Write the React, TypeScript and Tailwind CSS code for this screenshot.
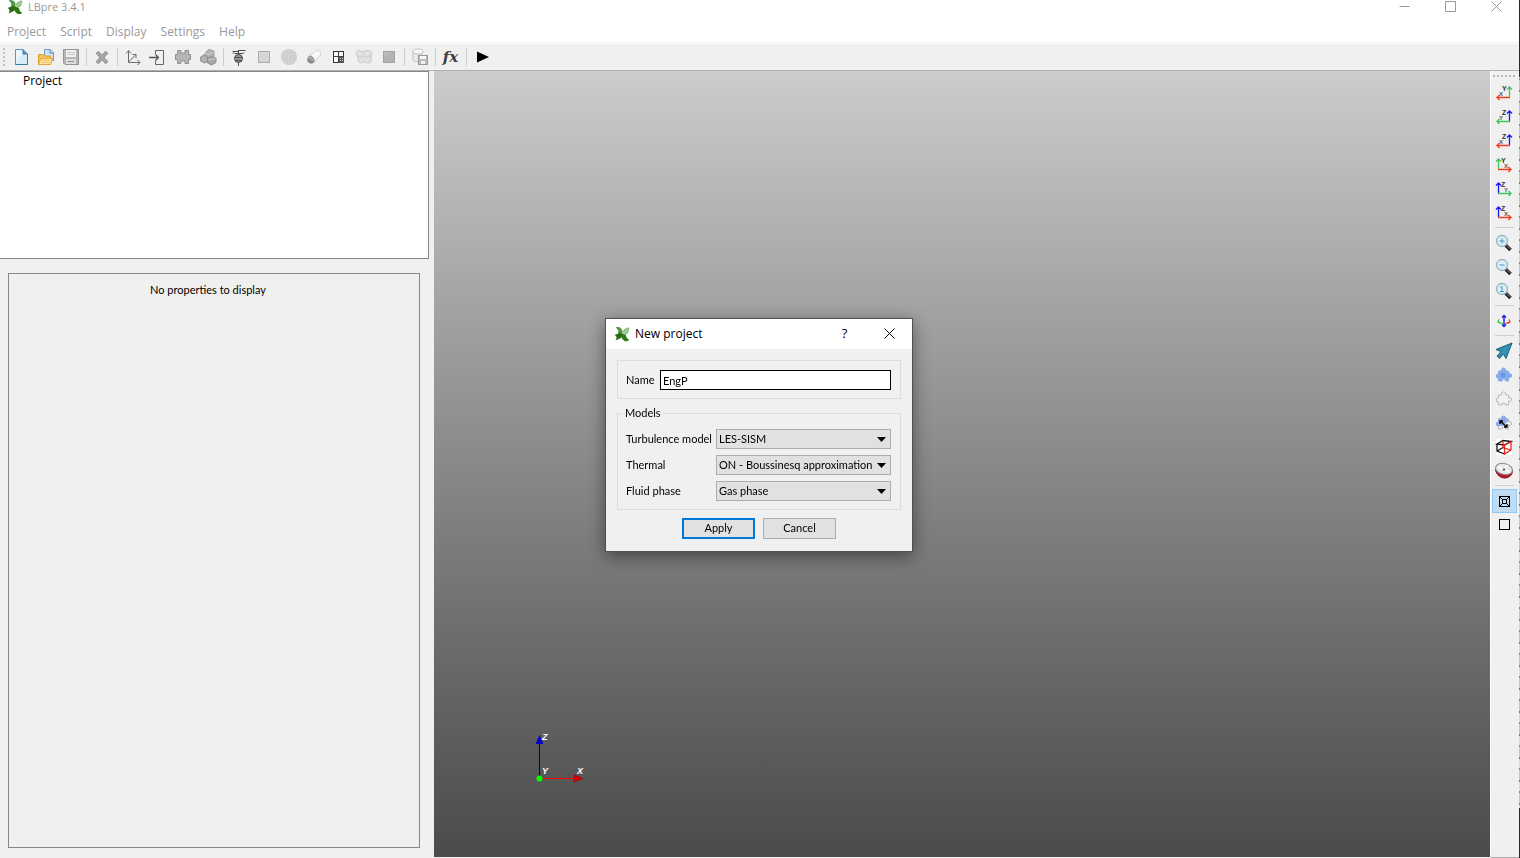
import type { ReactNode } from 'react';

const UI_FONT = "font-['Open_Sans','Noto_Sans',sans-serif]";
const FORM_FONT = "font-['Lato','Noto_Sans',sans-serif]";

const MENUS = ['Project', 'Script', 'Display', 'Settings', 'Help'];

function Logo() {
  return (
    <svg width="16" height="16" viewBox="0 0 16 16" className="shrink-0">
      <path d="M1.500 1.500C5 0 8 2 8.500 5L7.500 9L4 7.500C5 5 4 3 1.500 1.500Z" fill="#4f9a45" />
      <path d="M15.500 1.500C15 4 15 6 13 8L8.500 9.500L8 6.500C9.500 3 12 1.500 15.500 1.500Z" fill="#8cc083" />
      <path d="M13.500 3.500L9 8" stroke="#d5ead0" strokeWidth=".8" />
      <path d="M.500 9L7 6.500L8.500 10C6 13.500 4 13 1.500 14.500C3 12 3 10 .500 9Z" fill="#2a6a12" />
      <path d="M7.500 7.500L12 9C12 12 14 13 15.500 14L12 15.500C9 14.500 7 12 7 9Z" fill="#2f7516" />
    </svg>
  );
}

function Svg({ children }: { children: ReactNode }) {
  return (
    <svg width="18" height="18" viewBox="0 0 18 18" fill="none">
      {children}
    </svg>
  );
}

const newFile = (
  <Svg>
    <path d="M3.500 1.500H11L15.500 6V16.500H3.500Z" fill="#eef7fd" stroke="#5e93ba" />
    <path d="M4.500 12L12 4L15 7V16H4.500Z" fill="#d8ecf9" />
    <path d="M11 1.500V6H15.500" fill="#5e93ba" stroke="#3d79a6" />
    <path d="M15.500 6V16.500H3.500" stroke="#3f79a6" />
  </Svg>
);

const openFile = (
  <Svg>
    <path d="M7.500 1.500H13.500L16.500 4.500V12.500H7.500Z" fill="#cfe2f6" stroke="#6e9bd0" />
    <path d="M13 1.500V5H16.500" stroke="#4a7cba" fill="#e8f2fc" />
    <path d="M1.500 16.500V6.500H6L7.500 8H13.500V16.500Z" fill="#f6c45a" stroke="#e09c2b" />
    <path d="M1.500 16.500L4 10.500H15.500L13.500 16.500Z" fill="#fde7a6" stroke="#e5a53a" />
    <path d="M5 12.500H13M4.500 14.500H12.500" stroke="#f3c35e" />
  </Svg>
);

const save = (
  <Svg>
    <path d="M1.500 1.500H16.500V16.500H3L1.500 15Z" fill="#b5b5b5" stroke="#959595" />
    <rect x="4" y="2" width="10" height="7" fill="#f1f1f1" />
    <path d="M5 4.500H13M5 6.500H13" stroke="#c4c4c4" />
    <rect x="4" y="11" width="10" height="5" fill="#dedede" />
    <path d="M5.500 13.500H12" stroke="#8e8e8e" />
  </Svg>
);

const remove = (
  <Svg>
    <path d="M4 4L14 15M14 4L4 15" stroke="#919191" strokeWidth="4" />
    <path d="M4.500 4.500L13.500 14.500M13.500 4.500L4.500 14.500" stroke="#a9a9a9" strokeWidth="2" />
  </Svg>
);

const axes = (
  <Svg>
    <path d="M4.500 3V14.500H16" stroke="#6c6c6c" />
    <path d="M2 5.500L4.500 2.500L7 5.500M13.500 12L16 14.500L13.500 17" stroke="#6c6c6c" />
    <path d="M4.500 14L12 6.500M8.500 6.500H12V10" stroke="#6c6c6c" />
  </Svg>
);

const importIcon = (
  <Svg>
    <path d="M6.500 6V2.500H14.500V16.500H6.500V12.500" stroke="#666" />
    <path d="M0 9.500H9M6.500 6.500L9.500 9.500L6.500 12.500" stroke="#555" strokeWidth="1.300" />
  </Svg>
);

const puzzle = (
  <Svg>
    <path
      d="M3.500 2.500H7V5H11V2.500H14.500V6.500H16.500V11.500H14.500V15.500H11V13H7V15.500H3.500V11.500H1.500V6.500H3.500Z"
      fill="#b5b5b5"
      stroke="#919191"
    />
  </Svg>
);

const blocks = (
  <Svg>
    <path d="M6 5L10 1.500L15 3V8L10 11L6 9Z" fill="#b5b5b5" stroke="#979797" />
    <path d="M1.500 9L5 7L9 9V13.500L5.500 15L1.500 13Z" fill="#b0b0b0" stroke="#929292" />
    <path d="M8.500 10L13 8L17 10V14.500L12.500 17L8.500 15Z" fill="#a6a6a6" stroke="#909090" />
    <path d="M6 5L10 6.500L15 3.500M9 11L12.500 12L16.500 10" stroke="#cfcfcf" />
  </Svg>
);

const turbine = (
  <Svg>
    <path d="M2.500 3.500H8M9 2.500H15.500M8.500 2V7M4.500 5.500H13" stroke="#4c4c4c" />
    <circle cx="8.500" cy="10.500" r="4" fill="#959595" stroke="#505050" />
    <path d="M4 9.500H13M5 12.500H12M8.500 14V18" stroke="#555" />
    <path d="M2.500 5.500L4.500 4M13 5.500L14.500 4.500" stroke="#777" />
  </Svg>
);

const box = (
  <Svg>
    <rect x="3.500" y="3.500" width="11" height="11" fill="#d6d6d6" stroke="#ababab" />
  </Svg>
);

const sphere = (
  <Svg>
    <circle cx="9" cy="9" r="8" fill="#cecece" />
    <path d="M3 6H15M2 9H16M3 12H15M5 15H13M5 3H13" stroke="#e3e3e3" strokeDasharray="1 2" />
  </Svg>
);

const capsule = (
  <Svg>
    <path d="M4.500 8L11 2.500C14 1 17 4.500 15 7.500L9 14Z" fill="#f7f7f7" stroke="#cfcfcf" />
    <path d="M4.500 7.500C8 8 9.500 10 9.500 14C6 18 0 14 3 9Z" fill="#8d8d8d" />
    <path d="M3 9.500C5 9 7 10.500 8 13" stroke="#ababab" strokeWidth="2" />
  </Svg>
);

const mesh = (
  <Svg>
    <rect x="3.500" y="3.500" width="10" height="11" fill="#f8f8f8" stroke="#333" />
    <path d="M8.500 3.500V14.500M3.500 8.500H13.500" stroke="#444" />
    <rect x="9" y="9" width="5" height="6" fill="#555" />
    <path d="M10 10.500H13M10 12.500H13" stroke="#c5c5c5" strokeDasharray="1 1" />
  </Svg>
);

const sponge = (
  <Svg>
    <path
      d="M1.500 4C3 1 5 2.500 7 3.500C10 4.500 11 1 14 2.500C17 3 17.500 5 16.500 7L16 14C13 17 10 13 7 14.500C4 15.500 2 13 3 9C1 8 .500 5.500 1.500 4Z"
      fill="#dedede"
      stroke="#cecece"
    />
    <path d="M3 8.500C6 11 8 7 11 8.500C13 10 15 8.500 16 7.500" stroke="#cecece" />
    <path d="M5 6H6M11 5.500H13M5.500 12H7M11 11.500H12" stroke="#f0f0f0" strokeWidth="1.500" />
  </Svg>
);

const solidBox = (
  <Svg>
    <rect x="3.500" y="3.500" width="11" height="11" fill="#b3b3b3" stroke="#a2a2a2" />
    <path d="M4 10L10 4H4Z" fill="#bcbcbc" />
  </Svg>
);

const database = (
  <Svg>
    <path d="M2 3.500V12C4 14.500 9 14.500 11 12V3.500" fill="#eaeaea" stroke="#c2c2c2" />
    <ellipse cx="7" cy="3.500" rx="5" ry="2.500" fill="#f6f6f6" stroke="#c2c2c2" />
    <rect x="7.500" y="7.500" width="9" height="9" fill="#bcbcbc" stroke="#999" />
    <rect x="9" y="8" width="6" height="3" fill="#f7f7f7" />
    <rect x="10" y="13" width="4" height="3" fill="#f0f0f0" />
  </Svg>
);

const formula = (
  <span className="font-['DejaVu_Serif',serif] text-[15px] leading-5 font-bold text-[#3f3f3f] italic">fx</span>
);

const run = (
  <Svg>
    <path d="M4 3.500L16 9L4 14.500Z" fill="#000" />
  </Svg>
);

type Tool = { name: string; icon: ReactNode; active?: boolean };

const TOOL_GROUPS: Tool[][] = [
  [
    { name: 'New project', icon: newFile },
    { name: 'Open project', icon: openFile },
    { name: 'Save project', icon: save },
  ],
  [{ name: 'Delete', icon: remove }],
  [
    { name: 'Axes', icon: axes },
    { name: 'Import', icon: importIcon },
    { name: 'Part', icon: puzzle },
    { name: 'Assembly', icon: blocks },
  ],
  [
    { name: 'Probe', icon: turbine },
    { name: 'Box', icon: box },
    { name: 'Sphere', icon: sphere },
    { name: 'Cylinder', icon: capsule },
    { name: 'Mesh', icon: mesh },
    { name: 'Porous zone', icon: sponge },
    { name: 'Volume', icon: solidBox },
  ],
  [{ name: 'Export data', icon: database }],
  [{ name: 'Function', icon: formula }],
  [{ name: 'Run', icon: run }],
];

const AXIS_RED = '#ff3a20';
const AXIS_GREEN = '#3fc55b';
const AXIS_BLUE = '#1616ff';

interface ViewAxesProps {
  up: string;
  side: string;
  upLabel: string;
  sideLabel: string;
  flip?: boolean;
}

function ViewAxes({ up, side, upLabel, sideLabel, flip }: ViewAxesProps) {
  return (
    <Svg>
      <path d={flip ? 'M14.500 13V3M12 5.500L14.500 3L17 5.500' : 'M3.500 13V3M1 5.500L3.500 3L6 5.500'} stroke={up} strokeWidth="1.300" />
      <path d={flip ? 'M15 13.500H2M4.500 11L2 13.500L4.500 16' : 'M3 13.500H16M13.500 11L16 13.500L13.500 16'} stroke={side} strokeWidth="1.300" />
      <g fontWeight="700" fontFamily="'Liberation Sans', sans-serif">
        <text x={flip ? 7 : 6} y="7" fontSize="7" fill="#333">
          {upLabel}
        </text>
        <text x={flip ? 4 : 9} y="12" fontSize="6" fill="#555">
          {sideLabel}
        </text>
      </g>
    </Svg>
  );
}

function Magnifier({ children }: { children: ReactNode }) {
  return (
    <Svg>
      <path d="M10.500 11L15.500 16" stroke="#222" strokeWidth="3.500" />
      <path d="M11.500 11.500L15.500 15" stroke="#888" />
      <circle cx="7" cy="7" r="5.500" fill="#d9effa" stroke="#9cb4be" strokeWidth="1.300" />
      <g stroke="#4a93c4">{children}</g>
    </Svg>
  );
}

const PUZZLE_PIECE =
  'M3.500 5H6.500V3.500L7.500 2H9.500L10.500 3.500V5H13.500V8L15 7.500L16.500 8.500V10.500L15 11.500L13.500 11V15H10.500L10 13H7.500L7 15H3.500V12L1.500 11.500V8.500L3.500 8Z';

const VIEW_GROUPS: Tool[][] = [
  [
    { name: 'View -Z', icon: <ViewAxes flip up={AXIS_GREEN} side={AXIS_RED} upLabel="Y" sideLabel="X" /> },
    { name: 'View +X', icon: <ViewAxes flip up={AXIS_BLUE} side={AXIS_GREEN} upLabel="Z" sideLabel="Y" /> },
    { name: 'View +Y', icon: <ViewAxes flip up={AXIS_BLUE} side={AXIS_RED} upLabel="Z" sideLabel="X" /> },
    { name: 'View +Z', icon: <ViewAxes up={AXIS_GREEN} side={AXIS_RED} upLabel="Y" sideLabel="X" /> },
    { name: 'View -X', icon: <ViewAxes up={AXIS_BLUE} side={AXIS_GREEN} upLabel="Z" sideLabel="Y" /> },
    { name: 'View -Y', icon: <ViewAxes up={AXIS_BLUE} side={AXIS_RED} upLabel="Z" sideLabel="X" /> },
  ],
  [
    { name: 'Zoom in', icon: <Magnifier><path d="M4.500 7H9.500M7 4.500V9.500" /></Magnifier> },
    { name: 'Zoom out', icon: <Magnifier><path d="M4.500 7H9.500" /></Magnifier> },
    { name: 'Zoom to fit', icon: <Magnifier><path d="M5.500 5.500L7 4.500V9.500M5 9.500H9" /></Magnifier> },
  ],
  [
    {
      name: 'Rotate',
      icon: (
        <Svg>
          <path d="M9 4V14M7 5.500L9 3.500L11 5.500M7 12.500L9 14.500L11 12.500" stroke="#2626e8" strokeWidth="1.500" />
          <path d="M8 12L4 10M4 7.500L3 10L5.500 11.500" stroke="#3fc55b" strokeWidth="1.300" />
          <path d="M10 12L14 10M14 7.500L15 10L12.500 11.500" stroke="#f0402a" strokeWidth="1.300" />
        </Svg>
      ),
    },
  ],
  [
    {
      name: 'Select',
      icon: <Svg><path d="M17 1L1 7.500L6 9.500L2 14L4.500 16.500L8.500 12L11 16.500Z" fill="#3290b2" stroke="#1c5c76" /></Svg>,
    },
    {
      name: 'Select part',
      icon: (
        <Svg>
          <path d={PUZZLE_PIECE} fill="#8aabea" stroke="#8aabea" />
          <circle cx="8" cy="9" r="2.500" fill="#6e97de" />
        </Svg>
      ),
    },
    { name: 'Hide part', icon: <Svg><path d={PUZZLE_PIECE} fill="#f2f2f2" stroke="#b9b9b9" /></Svg> },
    {
      name: 'Swap selection',
      icon: (
        <Svg>
          <path d={PUZZLE_PIECE} fill="#f2f2f2" stroke="#b9b9b9" />
          <path d="M3 4.500H6L7 2H10L11 4.500H13V7L8 12H3L1 11V8.500L3 8Z" fill="#8aabea" />
          <path d="M5 7L12 13M5 10V7H8M9 13H12V10" stroke="#000" strokeWidth="1.300" />
        </Svg>
      ),
    },
    {
      name: 'Clip box',
      icon: (
        <Svg>
          <rect x="1" y="1" width="16" height="16" fill="#fff" />
          <path d="M2 6L8 2.500L16 3.500L9.500 7ZM2 6V13L9.500 16M2 13L8 9.500" stroke="#111" strokeWidth="1.300" />
          <path d="M9.500 7L16 3.500V12L9.500 16ZM8 3V9.500L15.500 12" stroke="#e5241c" strokeWidth="1.300" />
        </Svg>
      ),
    },
    {
      name: 'Clip plane',
      icon: (
        <Svg>
          <path d="M.500 7C1 13 6 16.500 11 16C15 15 18 12 17.500 8Z" fill="#bb1625" stroke="#8c1622" />
          <ellipse cx="9" cy="7" rx="8.500" ry="5.500" transform="rotate(14 9 7)" fill="#e8e8e8" stroke="#888" />
          <path d="M3 5L15 10M9 7L13 3" stroke="#fff" strokeWidth="1.500" />
          <circle cx="9" cy="7.500" r="1.200" fill="#666" />
        </Svg>
      ),
    },
  ],
  [
    {
      name: 'Perspective',
      active: true,
      icon: (
        <Svg>
          <rect x="4.500" y="4.500" width="10" height="10" stroke="#000" />
          <rect x="7.500" y="7.500" width="4" height="4" stroke="#000" />
          <path d="M4.500 4.500L7.500 7.500M14.500 4.500L11.500 7.500M4.500 14.500L7.500 11.500M14.500 14.500L11.500 11.500" stroke="#000" />
        </Svg>
      ),
    },
    { name: 'Orthographic', icon: <Svg><rect x="4.500" y="3.500" width="10" height="10" stroke="#000" /></Svg> },
  ],
];

function TitleBar() {
  return (
    <header className="flex h-3.5 items-center bg-white pl-[7px] text-[#999]">
      <Logo />
      <h1 className="ml-[5px] flex-1 text-[11px] leading-[14px]">LBpre 3.4.1</h1>
      {[
        { name: 'Minimize', d: 'M.500 5.500H10.500' },
        { name: 'Maximize', d: 'M.500 .500H10.500V10.500H.500Z' },
        { name: 'Close', d: 'M.500 .500L10.500 10.500M10.500 .500L.500 10.500' },
      ].map((c) => (
        <button key={c.name} aria-label={c.name} className="flex w-[46px] justify-center pb-0.5">
          <svg width="11" height="11" viewBox="0 0 11 11" fill="none" stroke="currentColor">
            <path d={c.d} />
          </svg>
        </button>
      ))}
    </header>
  );
}

function MainToolbar() {
  return (
    <div className="flex h-[27px] items-center border-b border-[#b0b0b0] bg-[#f0f0f0]">
      <div className="flex w-2 flex-col items-center gap-0.5">
        {[0, 1, 2, 3, 4].map((i) => (
          <span key={i} className="size-0.5 bg-[#c4c4c4]" />
        ))}
      </div>
      {TOOL_GROUPS.map((group, i) => (
        <div key={i} className="flex items-center">
          {i > 0 && <span className="mr-0.5 ml-[3px] h-[18px] w-px bg-[#cdcdcd]" />}
          {group.map((t) => (
            <button key={t.name} aria-label={t.name} className="flex h-6 w-[25px] items-center justify-center">
              {t.icon}
            </button>
          ))}
        </div>
      ))}
    </div>
  );
}

function ViewToolbar() {
  return (
    <div className="flex w-[29px] shrink-0 flex-col items-center border-b border-l border-b-[#b0b0b0] border-l-white bg-[#f0f0f0] pr-0.5">
      <div className="flex h-2.5 items-center gap-0.5">
        {[0, 1, 2, 3, 4, 5].map((i) => (
          <span key={i} className="size-0.5 bg-[#b8b8b8]" />
        ))}
      </div>
      {VIEW_GROUPS.map((group, i) => (
        <div key={i} className="flex flex-col items-center">
          {i > 0 && <span className="my-0.5 mb-[3px] h-px w-[19px] bg-[#cdcdcd]" />}
          {group.map((t) => (
            <button
              key={t.name}
              aria-label={t.name}
              className={
                t.active
                  ? 'flex h-6 w-[25px] items-center justify-center border border-[#90c8f6] bg-[#c0dcf3]'
                  : 'flex h-6 w-[25px] items-center justify-center'
              }
            >
              {t.icon}
            </button>
          ))}
        </div>
      ))}
    </div>
  );
}

function Triad() {
  return (
    <svg width="60" height="60" viewBox="0 0 60 60" className="absolute bottom-[67px] left-24">
      <path d="M9.500 48V14" stroke="#000080" />
      <path d="M9.500 5L13.500 14H5.500Z" fill="#0000c8" />
      <path d="M10 48.500H44" stroke="#f00" />
      <path d="M44 45L53 48.500L44 52Z" fill="#e00000" stroke="#700" strokeWidth=".5" />
      <circle cx="9.500" cy="48.500" r="3" fill="#0f0" />
      <g fill="#fff" fontSize="9" fontWeight="700" fontStyle="italic" fontFamily="'Liberation Sans', sans-serif">
        <text x="12" y="10">Z</text>
        <text x="12" y="44">Y</text>
        <text x="47" y="44">X</text>
      </g>
    </svg>
  );
}

function SelectRow({ id, label, options }: { id: string; label: string; options: string[] }) {
  return (
    <div className="flex items-center">
      <label htmlFor={id} className="w-[90px] whitespace-nowrap">
        {label}
      </label>
      <div className="relative flex-1">
        <select id={id} className="block h-5 w-full appearance-none border border-[#adadad] bg-[#e1e1e1] pl-0.5 leading-[18px]">
          {options.map((o) => (
            <option key={o}>{o}</option>
          ))}
        </select>
        <svg width="9" height="5" viewBox="0 0 9 5" className="pointer-events-none absolute top-2 right-[5px]">
          <path d="M0 0H9L4.500 5Z" fill="#000" />
        </svg>
      </div>
    </div>
  );
}

function NewProjectDialog() {
  return (
    <div className="fixed inset-0 flex items-center justify-center pt-3 pr-0.5">
      <div
        role="dialog"
        aria-label="New project"
        className="w-[308px] border border-[#505050] bg-[#f0f0f0] text-black shadow-[0_4px_16px_rgba(0,0,0,0.45)]"
      >
        <div className="flex h-[30px] items-center bg-white pl-2">
          <Logo />
          <h2 className="ml-[5px] flex-1 text-[12px]">New project</h2>
          <button aria-label="Help" className="w-[45px] text-[13px]">?</button>
          <button aria-label="Close dialog" className="flex w-[45px] justify-center pb-0.5">
            <svg width="11" height="11" viewBox="0 0 11 11" stroke="#000">
              <path d="M.500 .500L10.500 10.500M10.500 .500L.500 10.500" />
            </svg>
          </button>
        </div>

        <form className={`px-[11px] pt-[11px] pb-3 text-[11px] ${FORM_FONT}`} onSubmit={(e) => e.preventDefault()}>
          <div className="flex items-center border border-[#dcdcdc] py-2 pt-[9px] pr-[9px] pl-2">
            <label htmlFor="name" className="w-[34px]">
              Name
            </label>
            <input id="name" defaultValue="EngP" className="h-5 min-w-0 flex-1 border border-black bg-white pl-0.5 outline-none" />
          </div>

          <fieldset className="mt-[7px] border border-[#dcdcdc]">
            <legend className="ml-[5px] px-0.5 leading-[14px]">Models</legend>
            <div className="flex flex-col gap-1.5 pt-[9px] pr-[9px] pb-2 pl-2">
              <SelectRow id="turbulence" label="Turbulence model" options={['LES-SISM']} />
              <SelectRow id="thermal" label="Thermal" options={['ON - Boussinesq approximation']} />
              <SelectRow id="phase" label="Fluid phase" options={['Gas phase']} />
            </div>
          </fieldset>

          <div className="mt-2 flex justify-center gap-2">
            <button type="submit" className="h-[21px] w-[73px] border-2 border-[#0078d7] bg-[#e1e1e1]">
              Apply
            </button>
            <button type="button" className="h-[21px] w-[73px] border border-[#adadad] bg-[#e1e1e1]">
              Cancel
            </button>
          </div>
        </form>
      </div>
    </div>
  );
}

export default function App() {
  return (
    <div className={`flex min-h-screen bg-[#f0f0f0] ${UI_FONT}`}>
      <div className="flex min-w-0 flex-1 flex-col">
        <TitleBar />
        <nav className="flex h-7 items-center gap-3.5 bg-white pt-2 pl-[7px] text-[12px] text-[#999]">
          {MENUS.map((m) => (
            <button key={m}>{m}</button>
          ))}
        </nav>
        <div className="h-0.5 border-b border-white bg-[#f0f0f0]" />
        <MainToolbar />

        <main className="flex flex-1">
          <aside className="flex w-[434px] shrink-0 flex-col">
            <section className="mr-[5px] h-[188px] border border-l-0 border-[#828790] bg-white pl-[23px] text-[12px] leading-[18px]">
              Project
            </section>
            <section
              className={`mt-3.5 mr-3.5 mb-2.5 ml-2 flex-1 border border-[#828790] pt-[9px] pr-3 text-center text-[11px] leading-[14px] ${FORM_FONT}`}
            >
              No properties to display
            </section>
          </aside>
          <div className="relative mb-px flex-1 bg-linear-to-b from-[#cccccc] to-[#4b4b4b]">
            <Triad />
          </div>
          <ViewToolbar />
        </main>
      </div>
      <div className="flex w-px flex-col bg-[repeating-linear-gradient(#d8d8d8_0px,#d8d8d8_9px,#a07880_9px,#a07880_11px,#c9c4bc_11px,#c9c4bc_21px,#6d7590_21px,#6d7590_23px)]">
        <span className="h-[77px] bg-[#1d2a3c]" />
        <span className="mt-auto h-[50px] bg-[#1d2a3c]" />
      </div>
      <NewProjectDialog />
    </div>
  );
}
